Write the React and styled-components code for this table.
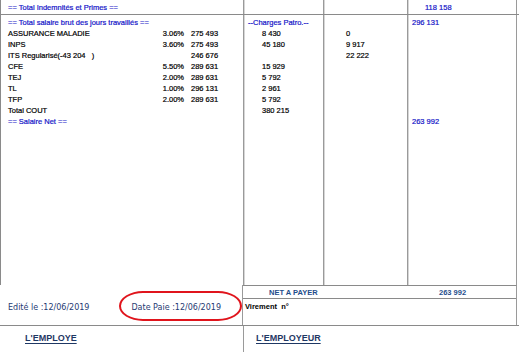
import React from 'react';
import styled, { createGlobalStyle } from 'styled-components';

const GlobalStyle = createGlobalStyle`
  html, body {
    margin: 0;
    padding: 0;
    background: #fff;
  }
  body {
    font-family: "Liberation Sans", Arial, sans-serif;
  }
`;

const lines = [
  { label: 'ASSURANCE MALADIE', pct: '3.06%', base: '275 493', patro: '8 430', sal: '0' },
  { label: 'INPS', pct: '3.60%', base: '275 493', patro: '45 180', sal: '9 917' },
  { label: 'ITS Regularisé(-43 204   )', pct: '', base: '246 676', patro: '', sal: '22 222' },
  { label: 'CFE', pct: '5.50%', base: '289 631', patro: '15 929', sal: '' },
  { label: 'TEJ', pct: '2.00%', base: '289 631', patro: '5 792', sal: '' },
  { label: 'TL', pct: '1.00%', base: '296 131', patro: '2 961', sal: '' },
  { label: 'TFP', pct: '2.00%', base: '289 631', patro: '5 792', sal: '' },
];

const App = () => {
  return (
    <Page>
      <GlobalStyle />
      <Grid>
        <Cell first height={14}>
          <Line blue>== Total Indemnités et Primes ==</Line>
        </Cell>
        <Cell height={14} />
        <Cell height={14} />
        <Cell last height={14}>
          <Line blue indent={13}>118 158</Line>
        </Cell>
      </Grid>

      <Grid bordered>
        <Cell first height={270}>
          <Line blue>== Total salaire brut des jours travaillés ==</Line>
          {lines.map((l) => (
            <Row key={l.label}>
              <Label>{l.label}</Label>
              <Pct>{l.pct}</Pct>
              <Amount>{l.base}</Amount>
            </Row>
          ))}
          <Line>Total COUT</Line>
          <Line blue>== Salaire Net ==</Line>
        </Cell>
        <Cell height={270}>
          <Line blue>--Charges Patro.--</Line>
          {lines.map((l) => (
            <Line key={l.label} indent={14}>{l.patro || '\u00a0'}</Line>
          ))}
          <Line indent={14}>380 215</Line>
        </Cell>
        <Cell height={270}>
          <Line>&nbsp;</Line>
          {lines.map((l) => (
            <Line key={l.label} indent={18}>{l.sal || '\u00a0'}</Line>
          ))}
        </Cell>
        <Cell last height={270}>
          <Line blue>296 131</Line>
          {lines.map((l) => (
            <Line key={l.label}>&nbsp;</Line>
          ))}
          <Line>&nbsp;</Line>
          <Line blue>263 992</Line>
        </Cell>
      </Grid>

      <Footer>
        <FooterLeft>
          <DateText>Edité le :12/06/2019</DateText>
          <DateText>Date Paie :12/06/2019</DateText>
        </FooterLeft>
        <NetBox>
          <NetRow>
            <NetLabel>NET A PAYER</NetLabel>
            <NetValue>263 992</NetValue>
          </NetRow>
          <Virement>Virement&nbsp; n°</Virement>
        </NetBox>
      </Footer>

      <Signatures>
        <SignCell>
          <SignTitle>L'EMPLOYE</SignTitle>
        </SignCell>
        <SignCell right>
          <SignTitle>L'EMPLOYEUR</SignTitle>
        </SignCell>
      </Signatures>

      <Circle />
    </Page>
  );
};

export default App;

const Page = styled.div`
  position: relative;
  width: 519px;
  height: 352px;
  overflow: hidden;
  background: #fff;
`;

const Grid = styled.div`
  display: grid;
  grid-template-columns: 243px 80px 84px 110px;
  border-top: ${(p) => (p.bordered ? '1px solid #8a8a8a' : 'none')};
`;

const Cell = styled.div`
  height: ${(p) => p.height}px;
  box-sizing: border-box;
  overflow: hidden;
  padding: ${(p) => (p.height > 20 ? '2px' : '2px')} 0 0 ${(p) => (p.first ? 7 : 4)}px;
  border-left: 1px solid ${(p) => (p.first ? '#8a8a8a' : '#9a9a9a')};
  box-shadow: ${(p) => (p.first ? 'none' : 'inset 1px 0 0 #d6d6d6')};
  border-right: ${(p) => (p.last ? '1px solid #9a9a9a' : 'none')};
`;

const Line = styled.div`
  font-size: 7.5px;
  line-height: 11px;
  height: 11px;
  white-space: pre;
  color: ${(p) => (p.blue ? '#1414c8' : '#000')};
  -webkit-text-stroke: 0.2px ${(p) => (p.blue ? '#1414c8' : '#000')};
  padding-left: ${(p) => p.indent || 0}px;
`;

const Row = styled.div`
  display: flex;
  font-size: 7.5px;
  line-height: 11px;
  height: 11px;
  white-space: pre;
  color: #000;
  -webkit-text-stroke: 0.2px #000;
`;

const Label = styled.span`
  width: 147px;
`;

const Pct = styled.span`
  width: 29px;
  text-align: right;
`;

const Amount = styled.span`
  margin-left: 7px;
`;

const Footer = styled.div`
  display: grid;
  grid-template-columns: 243px 274px;
  height: 40px;
`;

const FooterLeft = styled.div`
  display: flex;
  gap: 42px;
  padding: 18px 0 0 8px;
  box-sizing: border-box;
  border-right: 1px solid #9a9a9a;
`;

const DateText = styled.span`
  font-family: "DejaVu Sans", Verdana, sans-serif;
  font-size: 8px;
  line-height: 10px;
  color: #1f3b73;
`;

const NetBox = styled.div`
  border-top: 1px solid #8a8a8a;
  border-right: 1px solid #9a9a9a;
  display: flex;
  flex-direction: column;
`;

const NetRow = styled.div`
  display: flex;
  height: 12px;
  align-items: center;
  border-bottom: 1px solid #8a8a8a;
  font-size: 7.5px;
  font-weight: bold;
  color: #1f4e8c;
`;

const NetLabel = styled.span`
  width: 170px;
  padding-left: 26px;
`;

const NetValue = styled.span``;

const Virement = styled.div`
  font-size: 7.5px;
  font-weight: bold;
  color: #000;
  padding: 3px 0 0 2px;
`;

const Signatures = styled.div`
  display: grid;
  grid-template-columns: 243px 276px;
  border-top: 1px solid #8a8a8a;
  height: 26px;
`;

const SignCell = styled.div`
  padding: 1px 0 0 ${(p) => (p.right ? 12 : 25)}px;
  border-left: ${(p) => (p.right ? '1px solid #9a9a9a' : 'none')};
`;

const SignTitle = styled.span`
  font-size: 9px;
  font-weight: bold;
  color: #1f3864;
  text-decoration: underline;
  text-underline-offset: 2px;
`;

const Circle = styled.div`
  position: absolute;
  left: 119px;
  top: 291px;
  width: 123px;
  height: 30px;
  box-sizing: border-box;
  border: 2px solid #e0141c;
  border-radius: 24px / 15px;
  pointer-events: none;
`;
